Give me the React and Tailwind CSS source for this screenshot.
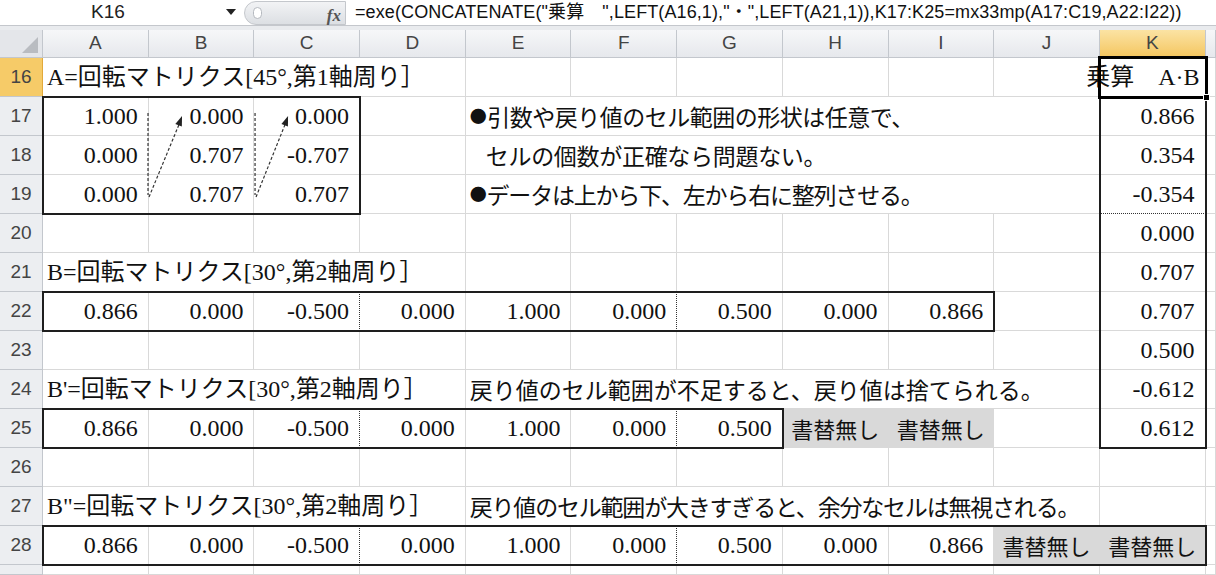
import React from 'react';

const SERIF = "font-['Liberation_Serif','Noto_Sans_CJK_JP',serif]";
const SANS = "font-['Liberation_Sans','Noto_Sans_CJK_JP',sans-serif]";
const GOTHIC = "font-['Noto_Sans_CJK_JP',sans-serif]";

const COLS = ['A', 'B', 'C', 'D', 'E', 'F', 'G', 'H', 'I', 'J', 'K', ''];

const SPAN = { 1: 'col-span-1', 4: 'col-span-4', 6: 'col-span-6' };

const num = (c, t, cls = '') => ({ c, t, kind: 'num', cls });
const gray = (c) => ({ c, t: '書替無し', kind: 'gray' });
const DOT = 'border-dotted border-r-[#333]';

// c = 列 (A=0), s = 横に流れる幅, dot = 先頭の●
const ROWS = {
  16: [
    { c: 0, s: 4, t: 'A=回転マトリクス[45°,第1軸周り］', kind: 'title' },
    { c: 10, t: '乗算　A·B', kind: 'head' },
  ],
  17: [num(0, '1.000'), num(1, '0.000'), num(2, '0.000'), { c: 4, s: 6, dot: true, t: '引数や戻り値のセル範囲の形状は任意で、', kind: 'note', cls: 'tracking-[-0.5px]' }, num(10, '0.866')],
  18: [num(0, '0.000'), num(1, '0.707'), num(2, '-0.707'), { c: 4, s: 6, t: 'セルの個数が正確なら問題ない。', kind: 'note', cls: 'pl-[20px] tracking-[-0.3px]' }, num(10, '0.354')],
  19: [num(0, '0.000'), num(1, '0.707'), num(2, '0.707'), { c: 4, s: 6, dot: true, t: 'データは上から下、左から右に整列させる。', kind: 'note', cls: 'tracking-[-1.2px]' }, num(10, '-0.354', 'border-dotted border-b-[#333]')],
  20: [num(10, '0.000')],
  21: [{ c: 0, s: 4, t: 'B=回転マトリクス[30°,第2軸周り］', kind: 'title' }, num(10, '0.707')],
  22: [
    num(0, '0.866'), num(1, '0.000'), num(2, '-0.500', DOT), num(3, '0.000'), num(4, '1.000'),
    num(5, '0.000', DOT), num(6, '0.500'), num(7, '0.000'), num(8, '0.866'), num(10, '0.707'),
  ],
  23: [num(10, '0.500')],
  24: [
    { c: 0, s: 4, t: "B'=回転マトリクス[30°,第2軸周り］", kind: 'title' },
    { c: 4, s: 6, t: '戻り値のセル範囲が不足すると、戻り値は捨てられる。', kind: 'note' },
    num(10, '-0.612'),
  ],
  25: [
    num(0, '0.866'), num(1, '0.000'), num(2, '-0.500', DOT), num(3, '0.000'), num(4, '1.000'),
    num(5, '0.000', DOT), num(6, '0.500'), gray(7), gray(8), num(10, '0.612'),
  ],
  26: [],
  27: [
    { c: 0, s: 4, t: 'B"=回転マトリクス[30°,第2軸周り］', kind: 'title' },
    { c: 4, s: 6, t: '戻り値のセル範囲が大きすぎると、余分なセルは無視される。', kind: 'note', cls: 'tracking-[-1.2px]' },
  ],
  28: [
    num(0, '0.866'), num(1, '0.000'), num(2, '-0.500', DOT), num(3, '0.000'), num(4, '1.000'),
    num(5, '0.000', DOT), num(6, '0.500'), num(7, '0.000'), num(8, '0.866'), gray(9), gray(10),
  ],
  29: [],
};

// 罫線 (表の上に重ねる)
const BOXES = [
  'col-start-2 col-end-5 row-start-3 row-end-6',
  'col-start-2 col-end-11 row-start-8 row-end-9',
  'col-start-2 col-end-9 row-start-11 row-end-12',
  'col-start-2 col-end-13 row-start-14 row-end-15',
  'col-start-12 col-end-13 row-start-3 row-end-12',
];

const GRID = 'grid grid-cols-[43px_repeat(11,105.7px)_1fr] grid-rows-[28px_repeat(13,39px)_1fr]';

function Cell({ spec }) {
  const base = 'border-r border-b border-[#d9d9d9] bg-white flex items-center whitespace-nowrap min-w-0 text-[#111]';
  if (!spec) return <div className={base} />;
  const span = SPAN[spec.s || 1];
  if (spec.kind === 'num') {
    return <div className={`${base} ${span} justify-end pr-[10px] text-[24px] ${SERIF} ${spec.cls}`}>{spec.t}</div>;
  }
  if (spec.kind === 'gray') {
    return <div className={`${base} ${span} !bg-[#d9d9d9] !border-[#d9d9d9] justify-center text-[22px] ${GOTHIC}`}>{spec.t}</div>;
  }
  if (spec.kind === 'head') {
    return <div className={`${base} ${span} justify-end pr-[5px] text-[24px] ${SERIF}`}>{spec.t}</div>;
  }
  if (spec.kind === 'title') {
    return <div className={`${base} ${span} pl-[4px] text-[24px] ${SERIF}`}>{spec.t}</div>;
  }
  return (
    <div className={`${base} ${span} pl-[4px] text-[23px] ${GOTHIC} ${spec.cls || ''}`}>
      {spec.dot && <span className="text-[17px] mr-[1px]">●</span>}
      {spec.t}
    </div>
  );
}

function renderRow(r) {
  const specs = ROWS[r];
  const cells = [];
  let i = 0;
  while (i < 12) {
    const spec = specs.find((s) => s.c === i);
    cells.push(<Cell key={`${r}-${i}`} spec={spec} />);
    i += spec ? spec.s || 1 : 1;
  }
  return cells;
}

function FormulaBar() {
  return (
    <div className={`h-[26px] flex items-center bg-white border-b border-[#c4c7cc] ${SANS}`}>
      <div className="w-[244px] h-full flex items-center relative">
        <span className="ml-[91px] text-[19px] text-[#222]">K16</span>
        <span className="absolute left-[226px] top-[9px] w-0 h-0 border-l-[5px] border-r-[5px] border-t-[6px] border-l-transparent border-r-transparent border-t-[#222]" />
      </div>
      <div className="w-[102px] h-[24px] rounded-l-full bg-gradient-to-b from-[#f2f3f5] to-[#dcdfe3] border border-[#c4c7cc] flex items-center relative">
        <span className="ml-[8px] w-[9px] h-[12px] rounded-full border border-[#b5b9bf] bg-white" />
        <span className="absolute right-[4px] top-[1px] text-[17px] italic font-bold text-[#555] font-['Liberation_Serif',serif]">fx</span>
      </div>
      <div className="flex-1 h-full flex items-center pl-[9px] text-[18px] tracking-[0.1px] text-[#111] overflow-hidden whitespace-nowrap">
        =exe(CONCATENATE("乗算　",LEFT(A16,1),"・",LEFT(A21,1)),K17:K25=mx33mp(A17:C19,A22:I22))
      </div>
    </div>
  );
}

function Arrows() {
  return (
    <svg className="col-start-2 col-end-5 row-start-3 row-end-6 w-full h-full" viewBox="0 0 317 117" preserveAspectRatio="none">
      <g stroke="#333" strokeWidth="1.2" strokeDasharray="3 2" fill="none">
        <line x1="105" y1="16" x2="105" y2="98" />
        <line x1="106" y1="100" x2="137" y2="25" />
        <line x1="212" y1="16" x2="212" y2="98" />
        <line x1="213" y1="100" x2="243" y2="25" />
      </g>
      <polygon points="139,19 138.8,29.6 132.3,27" fill="#222" />
      <polygon points="245,19 244.9,29.6 238.4,27" fill="#222" />
    </svg>
  );
}

export default function App() {
  const headerBase = 'border-r border-b border-[#c3c7cd] flex items-center justify-center text-[19px] text-[#444]';
  return (
    <div className={`w-[1216px] h-[575px] overflow-hidden bg-[#e9ebee] ${SANS}`}>
      <FormulaBar />
      <div className="h-[4px] bg-[#e9ebee]" />
      <div className="relative h-[545px]">
        <div className={`${GRID} h-full`}>
          {/* 列見出し */}
          <div className="border-r border-b border-[#c3c7cd] bg-[#e4e6ea] relative">
            <svg className="absolute right-[4px] bottom-[4px] w-[16px] h-[16px]" viewBox="0 0 16 16">
              <polygon points="16,0 16,16 0,16" fill="#b9bcc1" />
            </svg>
          </div>
          {COLS.map((c) => (
            <div
              key={c || 'L'}
              className={`${headerBase} ${c === 'K' ? 'bg-gradient-to-b from-[#fbe3a3] to-[#f4c65e] border-b-[#e2a93a]' : 'bg-gradient-to-b from-[#f6f7f9] to-[#e6e8ec]'}`}
            >
              {c}
            </div>
          ))}
          {[16, 17, 18, 19, 20, 21, 22, 23, 24, 25, 26, 27, 28, 29].map((r) => (
            <React.Fragment key={r}>
              <div
                className={`border-r border-b border-[#c3c7cd] flex items-end justify-center pb-[5px] text-[19px] text-[#444] ${r === 16 ? 'bg-[#f6cb68] border-r-[#e2a93a]' : 'bg-[#eceef1]'}`}
              >
                {r === 29 ? '' : r}
              </div>
              {renderRow(r)}
            </React.Fragment>
          ))}
        </div>

        {/* 罫線・矢印・選択枠 */}
        <div className={`${GRID} absolute inset-0 pointer-events-none`}>
          {BOXES.map((b) => (
            <div key={b} className={`${b} -m-px border-2 border-[#1e1e1e]`} />
          ))}
          <Arrows />
          <div className="col-start-12 col-end-13 row-start-2 row-end-3 -m-[2px] border-[3px] border-black relative">
            <span className="absolute -right-[5px] -bottom-[5px] w-[7px] h-[7px] bg-black border border-white" />
          </div>
        </div>
      </div>
    </div>
  );
}
